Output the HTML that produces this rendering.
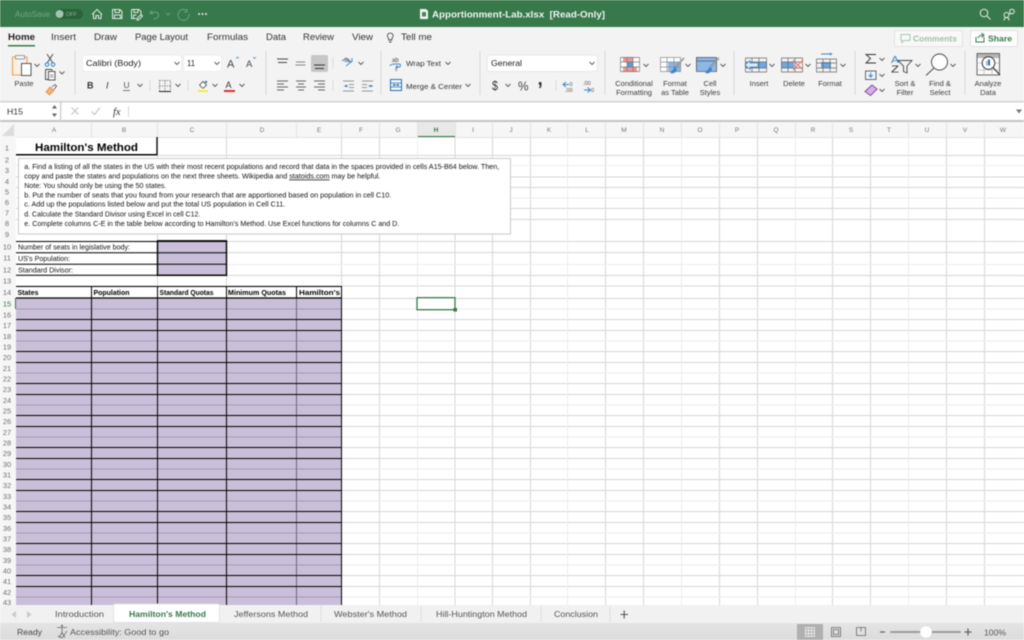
<!DOCTYPE html>
<html><head><meta charset="utf-8"><title>Apportionment-Lab.xlsx</title>
<style>
html,body{margin:0;padding:0;background:#fff;width:1024px;height:640px;overflow:hidden}
svg{display:block;position:absolute;left:0;top:0;filter:blur(.4px)}
text{font-family:"Liberation Sans",sans-serif;font-size:8px;fill:#3a3a3a;white-space:pre}
.r{font-size:7.5px;fill:#3c3c3c;text-anchor:middle}
.t{font-size:9px;fill:#333}
.s{font-size:7.4px;fill:#111}
.sb{font-size:7.2px;fill:#000;font-weight:bold}
.n{font-size:7.5px;fill:#707070;text-anchor:middle}
.c{font-size:6.5px;fill:#777;text-anchor:middle}
.tab{font-size:8.5px;fill:#555}
</style></head><body>
<svg width="1024" height="640" viewBox="0 0 1024 640" xmlns="http://www.w3.org/2000/svg">
<!-- title bar -->
<rect width="1024" height="27" fill="#37794a"/>
<text x="15" y="17" textLength="35" lengthAdjust="spacingAndGlyphs" style="font-size:8px;fill:#76a583">AutoSave</text>
<rect x="55" y="9" width="28" height="10" rx="5" fill="#2b6239"/>
<circle cx="59.5" cy="14" r="4" fill="#a5c2ad"/>
<text x="66" y="16" textLength="11" lengthAdjust="spacingAndGlyphs" style="font-size:5.5px;fill:#8fb59b">OFF</text>
<g fill="none" stroke="#dfeae2" stroke-width="1">
<path d="M92 14.5l5-5 5 5M93.5 13.5v5h2.5v-3h2.5v3h2.5v-5"/>
<path d="M112.5 9.5h7.5l2 2v7h-9.5zM115 9.5v3h4.500v-3M114.500 18.500v-3.500h6v3.500"/>
<path d="M131.500 9.500h7.500l2 2v2.500M131.500 9.500v9h4.500M134 9.500v3h4v-3M133.500 18v-3h3M137 18.500l4-4 1.500 1.500-4 4h-1.500z"/>
</g>
<g fill="none" stroke="#6f9f7e" stroke-width="1">
<path d="M151.500 10.500l-1.500 3h3.500M150.500 13c3-2 9-1 8 3-.5 2-3 3-5 3"/>
<path d="M166 13l2 2 2-2"/>
<path d="M187.500 11a5.500 5.500 0 1 0 1.500 3M187 9v3h-3"/>
</g>
<g fill="#e8f0ea"><circle cx="199" cy="14" r="1"/><circle cx="202.500" cy="14" r="1"/><circle cx="206" cy="14" r="1"/></g>
<path d="M420 9h6l2 2v8h-8z" fill="#f2f6f3"/><rect x="422" y="12" width="4" height="4.500" fill="#3f8a55"/>
<text x="432" y="17.500" textLength="173" lengthAdjust="spacingAndGlyphs" style="font-size:9.500px;font-weight:bold;fill:#f0f5f1">Apportionment-Lab.xlsx  [Read-Only]</text>
<g fill="none" stroke="#e6efe8" stroke-width="1">
<circle cx="984" cy="13" r="3.800"/><path d="M987 16l3.500 3.500"/>
<circle cx="1006.500" cy="15" r="2.500"/><path d="M1004 20.500c0-2 1.500-3 2.500-3 1.500 0 2.500 1 2.500 3"/><circle cx="1012" cy="11.500" r="2.300"/><path d="M1009 14c.5-.5 1.500-.5 2-.5"/>
</g>

<!-- tabs and ribbon -->
<rect y="27" width="1024" height="74" fill="#f3f3f3"/>
<text x="8" y="40" textLength="27" lengthAdjust="spacingAndGlyphs" class="t" style="font-weight:bold;fill:#1f1f1f">Home</text>
<rect x="8" y="45" width="27" height="1.500" fill="#37794a"/>
<text x="51" y="40" textLength="25" lengthAdjust="spacingAndGlyphs" class="t">Insert</text>
<text x="94" y="40" textLength="23" lengthAdjust="spacingAndGlyphs" class="t">Draw</text>
<text x="135" y="40" textLength="53" lengthAdjust="spacingAndGlyphs" class="t">Page Layout</text>
<text x="207" y="40" textLength="41" lengthAdjust="spacingAndGlyphs" class="t">Formulas</text>
<text x="266" y="40" textLength="20" lengthAdjust="spacingAndGlyphs" class="t">Data</text>
<text x="303" y="40" textLength="31" lengthAdjust="spacingAndGlyphs" class="t">Review</text>
<text x="352" y="40" textLength="21" lengthAdjust="spacingAndGlyphs" class="t">View</text>
<path d="M388 37.500a2.800 2.800 0 1 1 4.500 0c-.7.800-.8 1.500-.8 2.500h-2.900c0-1-.1-1.700-.8-2.500zM389 42h2.500" fill="none" stroke="#444" stroke-width=".9"/>
<text x="401" y="40" textLength="31" lengthAdjust="spacingAndGlyphs" class="t">Tell me</text>

<rect x="894.500" y="30.500" width="68" height="16" rx="1.500" fill="#f8f8f8" stroke="#e2e2e2"/>
<path d="M901 34.500h9v6h-6l-2 2v-2h-1z" fill="none" stroke="#a9c7b2"/>
<text x="913" y="41.500" textLength="44" lengthAdjust="spacingAndGlyphs" style="font-size:8.500px;font-weight:bold;fill:#9fbfa9">Comments</text>
<rect x="970.500" y="30.500" width="47" height="16" rx="1.500" fill="#fdfdfd" stroke="#e0e0e0"/>
<path d="M976 37v5h8v-5M978 38c1-2 3-3 5-3M981.500 33l2.500 2-2.500 2.500" fill="none" stroke="#37794a"/>
<text x="988" y="41.500" textLength="24" lengthAdjust="spacingAndGlyphs" style="font-size:8.500px;font-weight:bold;fill:#37794a">Share</text>

<!-- separators -->
<path d="M75 51v44M266 51v44M381 51v44M480 51v44M605 51v44M734 51v44M855 51v44M965 51v44" stroke="#d6d6d6" fill="none"/>
<path d="M150 80v11M188 80v11M333 57v12M333 80v11M556 80v11" stroke="#dcdcdc" fill="none"/>

<!-- chevrons -->
<path fill="none" stroke="#555" stroke-width=".9" d="M34.500 64l2.500 2.500 2.500-2.500M59.500 71.500l2.500 2.500 2.500-2.500M137.500 84l2.500 2.500 2.500-2.500M175.500 84l2.500 2.500 2.500-2.500M212.500 84l2.500 2.500 2.500-2.500M239.500 84l2.500 2.500 2.500-2.500M358.500 62l2.500 2.500 2.500-2.500M445.500 62l2.500 2.500 2.500-2.500M465.500 84l2.500 2.500 2.500-2.500M505.500 84l2.500 2.500 2.500-2.500M643.500 64l2.500 2.500 2.500-2.500M685.500 64l2.500 2.500 2.500-2.500M720.500 64l2.500 2.500 2.500-2.500M769.500 64l2.500 2.500 2.500-2.500M805.500 64l2.500 2.500 2.500-2.500M840.500 64l2.500 2.500 2.500-2.500M879.500 58l2.500 2.500 2.500-2.500M879.500 74l2.500 2.500 2.500-2.500M879.500 89l2.500 2.500 2.500-2.500M915.500 64l2.500 2.500 2.500-2.500M950.500 64l2.500 2.500 2.500-2.500"/>

<!-- clipboard -->
<path d="M16 57h-3.500v18h8.500M24 57h3v6" fill="#fbeedd" stroke="#e9a25b" stroke-width="1.100"/>
<rect x="15.500" y="55.500" width="9" height="3.500" fill="#f6f6f6" stroke="#8a8a8a" stroke-width=".8"/>
<rect x="21.500" y="63.500" width="9.500" height="12" fill="#fff" stroke="#444" stroke-width=".9"/>
<text x="24" y="86" class="r">Paste</text>
<path d="M47 54l5.500 8.500M53 54l-5.500 8.500" stroke="#444" fill="none" stroke-width=".9"/>
<circle cx="47" cy="64.500" r="1.800" fill="none" stroke="#2f7fc4"/><circle cx="53" cy="64.500" r="1.800" fill="none" stroke="#2f7fc4"/>
<path d="M45.500 69.500h6l1 1M45.500 69.500v10h2.500" fill="none" stroke="#444" stroke-width=".9"/><rect x="48.500" y="71.500" width="6.500" height="8.500" fill="#fff" stroke="#444" stroke-width=".9"/><path d="M50 75h3.500M50 77h3.500" stroke="#666" stroke-width=".7"/>
<path d="M46 92l4-5 4 3.500-4.500 4.500z" fill="#f1b27a" stroke="#de8e3f" stroke-width=".8"/><path d="M52 87l3-2.500 1.500 1.500-2.500 3.500" fill="#fff" stroke="#444" stroke-width=".8"/>

<!-- font group -->
<rect x="82.500" y="55" width="99" height="16.500" rx="2" fill="#fff" stroke="#ececec"/>
<rect x="183.500" y="55" width="38" height="16.500" rx="2" fill="#fff" stroke="#ececec"/>
<path fill="none" stroke="#555" stroke-width=".9" d="M174.500 62l2.500 2.500 2.500-2.500M214.500 62l2.500 2.500 2.500-2.500"/>
<text x="86" y="66" textLength="55" lengthAdjust="spacingAndGlyphs" style="font-size:8.500px;fill:#222">Calibri (Body)</text>
<text x="187" y="66" textLength="8" lengthAdjust="spacingAndGlyphs" style="font-size:8.500px;fill:#222">11</text>
<text x="227" y="67.500" style="font-size:11px;fill:#444">A</text>
<path d="M236 58.500l1.500-1.500 1.500 1.500" fill="none" stroke="#4a90d0" stroke-width=".8"/>
<text x="246" y="67" style="font-size:9.500px;fill:#444">A</text>
<path d="M253 57l1.500 1.500 1.500-1.500" fill="none" stroke="#4a90d0" stroke-width=".8"/>
<text x="87" y="88.500" style="font-size:9px;font-weight:bold;fill:#333">B</text>
<text x="106" y="88.500" style="font-size:9px;font-style:italic;fill:#333">I</text>
<text x="123.500" y="88" style="font-size:8.500px;fill:#555">U</text><path d="M123 90.500h7" stroke="#777"/>
<path d="M159.500 80.500h11v11h-11zM165 80.500v11M159.500 86h11" fill="none" stroke="#555" stroke-width=".8" stroke-dasharray="1.200 1.200"/><path d="M159 91.500h12" stroke="#222"/>
<path d="M199.500 85l3.500-3.500 3.500 3.500-3 3h-1z" fill="#fff" stroke="#444" stroke-width=".8"/><circle cx="206" cy="82" r="1.200" fill="#3c7fbf"/>
<rect x="198" y="90" width="10" height="2" fill="#f3ee3a"/>
<text x="225.500" y="88" style="font-size:9px;fill:#333">A</text>
<rect x="224" y="90" width="11" height="2" fill="#e0302a"/>

<!-- alignment -->
<rect x="311" y="55" width="17" height="17" rx="1.500" fill="#c7c7c7"/>
<path fill="none" stroke="#444" stroke-width=".9" d="M277 59h11M278 62.500h9"/>
<path fill="none" stroke="#888" stroke-width=".9" d="M296 62h9M295.500 65h10"/>
<path fill="none" stroke="#333" stroke-width=".9" d="M314 65h11M315 68.500h9"/>
<path fill="none" stroke="#666" stroke-width=".9" d="M277 81h11M277 84h7M277 87h11M277 90h7M296 81h10M298 84h6M296 87h10M298 90h6M314 81h11M318 84h7M314 87h11M318 90h7"/>
<path d="M342 61l4-3 5 5M346 66l6-5M352 58v3.500h-3" fill="none" stroke="#4a90d0" stroke-width="1"/>
<text x="344" y="62" style="font-size:5.500px;fill:#555">ab</text>
<path d="M343 81h11M349 84.500h5M349 87.500h5M343 91h11M344 86h4" fill="none" stroke="#777" stroke-width=".8"/>
<path d="M362 81h11M362 84.500h5M362 87.500h5M362 91h11M373 86h-5" fill="none" stroke="#777" stroke-width=".8"/>
<path d="M344 86l3-1.500v3zM373 86l-3-1.500v3z" fill="#3c86cc"/>

<!-- wrap / merge -->
<text x="392" y="62" style="font-size:6px;fill:#444">ab</text>
<path d="M390 66c0-2 5-2 7-2h2c2 0 2 3 0 3h-3m1.500-1.500l-1.500 1.500 1.500 1.500" fill="none" stroke="#3c86cc" stroke-width=".9"/>
<text x="395" y="71" style="font-size:5px;fill:#444">c</text>
<text x="406" y="66" textLength="35" lengthAdjust="spacingAndGlyphs" style="font-size:7.500px;fill:#333">Wrap Text</text>
<rect x="390.500" y="79.500" width="11" height="11" fill="#f3f8fd" stroke="#2d6ea8"/><path d="M390.500 83h11M390.500 87h11M393 85h6M393 85l1.500-1M393 85l1.500 1M399 85l-1.500-1M399 85l-1.500 1" stroke="#2d6ea8" stroke-width=".8" fill="none"/>
<text x="406" y="89" textLength="56" lengthAdjust="spacingAndGlyphs" style="font-size:7.500px;fill:#333">Merge &amp; Center</text>

<!-- number -->
<rect x="487.500" y="55" width="110" height="16.500" rx="2" fill="#fff" stroke="#e6e6e6"/>
<path fill="none" stroke="#555" stroke-width=".9" d="M589.500 62l2.500 2.500 2.500-2.500"/>
<text x="491" y="66" textLength="31" lengthAdjust="spacingAndGlyphs" style="font-size:8.500px;fill:#222">General</text>
<text x="492" y="90" textLength="6" lengthAdjust="spacingAndGlyphs" style="font-size:12.500px;fill:#333">$</text>
<text x="518" y="90.500" textLength="10.500" lengthAdjust="spacingAndGlyphs" style="font-size:13px;fill:#444">%</text>
<text x="537.500" y="85" style="font-size:19px;font-weight:bold;fill:#333">,</text>
<path d="M566 82l-3 2.500 3 2.500M563 84.500h6" fill="none" stroke="#3c86cc"/>
<text x="569.500" y="86" style="font-size:5.500px;fill:#555">0</text>
<text x="565" y="92" style="font-size:5.500px;fill:#555">.00</text>
<text x="583" y="85" style="font-size:5.500px;fill:#555">.00</text>
<path d="M584 90h6M587.500 87.500l3 2.500-3 2.500" fill="none" stroke="#3c86cc"/>
<text x="591" y="92" style="font-size:5.500px;fill:#555">0</text>

<!-- conditional -->
<rect x="620" y="57" width="20" height="15" fill="#fff"/>
<rect x="623" y="57" width="10" height="5" fill="#ef9595"/><rect x="627" y="62" width="6" height="5" fill="#5b9bd5"/><rect x="623" y="67" width="14" height="5" fill="#ef9595"/>
<path d="M620.500 57.500h19v14h-19zM620.500 62h19M620.500 67h19M627 57.500v14M633 57.500v14" fill="none" stroke="#777" stroke-width=".7"/>
<text x="634" y="86" class="r">Conditional</text><text x="634" y="95" class="r">Formatting</text>
<!-- format table -->
<rect x="660" y="57" width="21" height="15" fill="#fff"/><rect x="668" y="62" width="13" height="10" fill="#8db8e6"/>
<path d="M660.500 57.500h20v14h-20zM660.500 62h20M660.500 67h20M667 57.500v14M674 57.500v14" fill="none" stroke="#8a8a8a" stroke-width=".7"/>
<path d="M684 58l-9 9.500" stroke="#444" stroke-width="1.600"/><path d="M684 58l-9 9.500" stroke="#f5f5f5" stroke-width=".6"/><path d="M675 67l-5 6c3 1 6 0 7-4z" fill="#3c86cc"/>
<text x="675" y="86" class="r">Format</text><text x="675" y="95" class="r">as Table</text>
<!-- cell styles -->
<rect x="696" y="57" width="20" height="14" fill="#8db8e6"/>
<path d="M696.500 57.500h20v14h-20zM696.500 61h20" fill="none" stroke="#555" stroke-width=".8"/>
<path d="M719 58l-9 9.500" stroke="#444" stroke-width="1.600"/><path d="M719 58l-9 9.500" stroke="#f5f5f5" stroke-width=".6"/><path d="M710 67l-5 6c3 1 6 0 7-4z" fill="#3c86cc"/>
<text x="710" y="86" class="r">Cell</text><text x="710" y="95" class="r">Styles</text>
<!-- insert -->
<rect x="745" y="62" width="22" height="6" fill="#6ea8e0"/>
<path d="M745.500 58h21v14h-21zM745.500 62h21M745.500 68h21M752 58v14M759 58v14" fill="none" stroke="#666" stroke-width=".7"/>
<path d="M745 65l5-4.500v2.500h8v4h-8v2.500z" fill="#dcebfa" stroke="#3c86cc" stroke-width=".8"/>
<text x="759" y="86" class="r">Insert</text>
<!-- delete -->
<rect x="781" y="62" width="13" height="6" fill="#6ea8e0"/>
<path d="M781.500 58h21v14h-21zM781.500 62h21M781.500 68h21M788 58v14M795 58v14" fill="none" stroke="#666" stroke-width=".7"/>
<path d="M793 60l10 10M803 60l-10 10" stroke="#ee7a72" stroke-width="1.200"/>
<text x="794" y="86" class="r">Delete</text>
<!-- format -->
<rect x="821" y="62" width="10" height="6" fill="#6ea8e0"/>
<path d="M816.500 59h20v13h-20zM816.500 63h20M816.500 68h20M823 59v13M830 59v13" fill="none" stroke="#666" stroke-width=".7"/>
<path d="M821 54h11" stroke="#3c86cc"/><path d="M830 52.500l2.500 1.500-2.500 1.500z" fill="#3c86cc"/>
<text x="830" y="86" class="r">Format</text>
<!-- sigma etc -->
<path d="M876 54.500h-10l4.500 4-4.500 4.500h10" fill="none" stroke="#333" stroke-width=".9"/>
<rect x="865.500" y="71" width="10.500" height="8.500" fill="#eef4fb" stroke="#444" stroke-width=".8"/><path d="M870.700 72.500v4.500M868.700 75l2 2 2-2" fill="none" stroke="#3c86cc"/>
<path d="M865 91.500l7-6.500 5 4-6.500 6.500z" fill="#d3b2e2" stroke="#8a43a8" stroke-width="1"/>
<text x="891" y="63" textLength="8" lengthAdjust="spacingAndGlyphs" style="font-size:10px;fill:#3c86cc">A</text>
<text x="891" y="72.500" textLength="8" lengthAdjust="spacingAndGlyphs" style="font-size:10px;fill:#333">Z</text>
<path d="M898 60.500h14l-5 5.500v7l-3.500-1.500v-5.500z" fill="none" stroke="#444" stroke-width=".9"/>
<text x="905" y="86" class="r">Sort &amp;</text><text x="905" y="95" class="r">Filter</text>
<circle cx="939.500" cy="62" r="8" fill="#fff" stroke="#444" stroke-width=".9"/><path d="M934 68l-8 7.500" stroke="#444" stroke-width=".9"/>
<text x="940" y="86" class="r">Find &amp;</text><text x="940" y="95" class="r">Select</text>
<rect x="977" y="53.500" width="22.500" height="21.500" fill="#fafafa" stroke="#444" stroke-width=".8"/>
<rect x="977.500" y="54" width="21.500" height="4" fill="#b5b5b5"/>
<path d="M977 63h22M977 70h22M984 58v17M992 58v17" stroke="#aaa" stroke-width=".6"/>
<circle cx="988.500" cy="63" r="6.300" fill="#fff" stroke="#333"/><rect x="986" y="61" width="1.500" height="4.500" fill="#8db8e6"/><rect x="988" y="59.500" width="2" height="6" fill="#2d6ea8"/><path d="M993 67.500l7 7.500" stroke="#333" stroke-width="1.200"/>
<text x="988" y="86" class="r">Analyze</text><text x="988" y="95" class="r">Data</text>

<!-- formula bar -->
<rect y="101" width="1024" height="1.500" fill="#d0d0d0"/>
<rect y="102.500" width="1024" height="18" fill="#fff"/>
<rect y="120" width="1024" height="2" fill="#c4c4c4"/>
<path d="M60.500 102v18" stroke="#c8c8c8"/>
<rect x="61" y="102.500" width="1" height="18" fill="#f0f0f0"/>
<text x="7" y="114.500" textLength="16" lengthAdjust="spacingAndGlyphs" style="font-size:8.500px;fill:#333">H15</text>
<path d="M52 108.500l2.500-3.500 2.500 3.500zM52 113.500l2.500 3.500 2.500-3.500z" fill="#666"/>
<path d="M71.500 107.500l7 7M78.500 107.500l-7 7" stroke="#c4c4c4" stroke-width="1.100"/>
<path d="M91.500 111.500l3 3 5.500-7" fill="none" stroke="#c4c4c4" stroke-width="1.100"/>
<text x="113" y="115" style="font-family:'Liberation Serif',serif;font-size:10.500px;font-style:italic;fill:#333">fx</text>
<path d="M128.500 106v11" stroke="#d5d5d5"/>
<path d="M1016 109.500h6l-3 4z" fill="#777"/>

<!-- headers -->
<rect y="122" width="1024" height="15" fill="#f6f6f6"/>
<rect x="0" y="137" width="16" height="468" fill="#f6f6f6"/>
<path d="M14 124v12h-12z" fill="#dcdcdc"/>
<rect x="417" y="122" width="38" height="15" fill="#e8e8e8"/>
<rect x="417" y="136" width="38" height="1.200" fill="#37794a"/>
<path stroke="#e2e2e2" fill="none" d="M16 137.500H417M455 137.500H1024M91.500 123v14M157.500 123v14M226.500 123v14M296.500 123v14M341.500 123v14M379.500 123v14M417.500 123v14M455.500 123v14M492.500 123v14M530.500 123v14M567.500 123v14M605.500 123v14M643.500 123v14M681.500 123v14M719.500 123v14M757.500 123v14M795.500 123v14M832.500 123v14M870.500 123v14M908.500 123v14M946.500 123v14M984.500 123v14"/>
<text x="54" y="132" class="c">A</text><text x="124" y="132" class="c">B</text><text x="192" y="132" class="c">C</text><text x="262" y="132" class="c">D</text><text x="319" y="132" class="c">E</text><text x="361" y="132" class="c">F</text><text x="398" y="132" class="c">G</text><text x="436" y="132" class="c" style="fill:#37794a;font-weight:bold">H</text><text x="473" y="132" class="c">I</text><text x="511" y="132" class="c">J</text><text x="549" y="132" class="c">K</text><text x="587" y="132" class="c">L</text><text x="624" y="132" class="c">M</text><text x="662" y="132" class="c">N</text><text x="700" y="132" class="c">O</text><text x="737" y="132" class="c">P</text><text x="776" y="132" class="c">Q</text><text x="813" y="132" class="c">R</text><text x="851" y="132" class="c">S</text><text x="889" y="132" class="c">T</text><text x="927" y="132" class="c">U</text><text x="965" y="132" class="c">V</text><text x="1003" y="132" class="c">W</text>

<!-- grid -->
<path stroke="#d6d6d6" fill="none" d="M16 155.500H1024M16 177H1024M16 187.500H1024M16 208.500H1024M16 219.500H1024M16 241.500H1024M16 252.500H1024M16 275.500H1024M16 286H1024M16 298.500H1024M16 319.500H1024M16 330.500H1024M16 351.500H1024M16 362.500H1024M16 383.500H1024M16 394.500H1024M16 415.500H1024M16 426.500H1024M16 447.500H1024M16 458.500H1024M16 479.500H1024M16 490.500H1024M16 511.500H1024M16 522.500H1024M16 543.500H1024M16 554.500H1024M16 575.500H1024M16 586.500H1024M379.500 137V605M455 137V605M492.500 137V605M530.500 137V605M605.500 137V605M643.500 137V605M719.500 137V605M757.500 137V605M832.500 137V605M870.500 137V605M946.500 137V605M984.500 137V605M157.500 137V605M226.500 137V605M341.500 137V605"/>
<path stroke="#ececec" fill="none" d="M16 165.500H1024M16 198H1024M16 264.500H1024M16 309H1024M16 341H1024M16 373H1024M16 405H1024M16 437H1024M16 469H1024M16 501H1024M16 533H1024M16 565H1024M16 597H1024M417.500 137V605M567.500 137V605M681.500 137V605M795.500 137V605M908.500 137V605"/>

<!-- row numbers -->
<text x="7" y="150.500" class="n">1</text><text x="7" y="162.500" class="n">2</text><text x="7" y="173" class="n">3</text><text x="7" y="184" class="n">4</text><text x="7" y="194.500" class="n">5</text><text x="7" y="205" class="n">6</text><text x="7" y="215.500" class="n">7</text><text x="7" y="226" class="n">8</text><text x="7" y="237" class="n">9</text>
<text x="7" y="249.500" class="n">10</text><text x="7" y="260.500" class="n">11</text><text x="7" y="272.500" class="n">12</text><text x="7" y="283.500" class="n">13</text><text x="7" y="295" class="n">14</text><text x="7" y="306.500" class="n" style="fill:#37794a">15</text><text x="7" y="317.500" class="n">16</text><text x="7" y="328" class="n">17</text><text x="7" y="339" class="n">18</text><text x="7" y="349.500" class="n">19</text><text x="7" y="360" class="n">20</text><text x="7" y="371" class="n">21</text><text x="7" y="381.500" class="n">22</text><text x="7" y="392" class="n">23</text><text x="7" y="403" class="n">24</text><text x="7" y="413.500" class="n">25</text><text x="7" y="424" class="n">26</text><text x="7" y="435" class="n">27</text><text x="7" y="445.500" class="n">28</text><text x="7" y="456" class="n">29</text><text x="7" y="467" class="n">30</text><text x="7" y="477.500" class="n">31</text><text x="7" y="488" class="n">32</text><text x="7" y="499" class="n">33</text><text x="7" y="509.500" class="n">34</text><text x="7" y="520" class="n">35</text><text x="7" y="531" class="n">36</text><text x="7" y="541.500" class="n">37</text><text x="7" y="552" class="n">38</text><text x="7" y="563" class="n">39</text><text x="7" y="573.500" class="n">40</text><text x="7" y="584" class="n">41</text><text x="7" y="595" class="n">42</text><text x="7" y="605" class="n">43</text>

<!-- title cell -->
<rect x="16" y="137.500" width="141" height="17.500" fill="#fff"/>
<path d="M16 154.700H157.500M157 137V155" stroke="#000" stroke-width="1.300" fill="none"/>
<text x="35" y="151" textLength="103" lengthAdjust="spacingAndGlyphs" style="font-size:11px;font-weight:bold;fill:#000">Hamilton's Method</text>

<!-- text box -->
<rect x="18.500" y="158.500" width="492" height="75.500" fill="#fff" stroke="#c8c8c8"/>
<text x="24.300" y="169" textLength="475" lengthAdjust="spacingAndGlyphs" class="s">a. Find a listing of all the states in the US with their most recent populations and record that data in the spaces provided in cells A15-B64 below. Then,</text>
<text x="24.300" y="178.500" textLength="356" lengthAdjust="spacingAndGlyphs" class="s">copy and paste the states and populations on the next three sheets. Wikipedia and <tspan text-decoration="underline">statoids.com</tspan> may be helpful.</text>
<text x="24.300" y="188" textLength="142" lengthAdjust="spacingAndGlyphs" class="s">Note: You should only be using the 50 states.</text>
<text x="24.300" y="197.500" textLength="367" lengthAdjust="spacingAndGlyphs" class="s">b. Put the number of seats that you found from your research that are apportioned based on population in cell C10.</text>
<text x="24.300" y="206.500" textLength="261" lengthAdjust="spacingAndGlyphs" class="s">c. Add up the populations listed below and put the total US population in Cell C11.</text>
<text x="24.300" y="216.500" textLength="176" lengthAdjust="spacingAndGlyphs" class="s">d. Calculate the Standard Divisor using Excel in cell C12.</text>
<text x="24.300" y="226" textLength="375" lengthAdjust="spacingAndGlyphs" class="s">e. Complete columns C-E in the table below according to Hamilton's Method. Use Excel functions for columns C and D.</text>

<!-- small table -->
<rect x="16" y="241" width="141" height="34.500" fill="#fff"/>
<rect x="157.500" y="241" width="69" height="34.500" fill="#c9bfd9"/>
<path d="M16 241.500H226M16 252.700H226M16 264.200H226M16 275.300H226" stroke="#000" fill="none"/>
<path d="M157.500 240.500V276M226.500 240.500V276M157 240.800H227M157 275.300H227" stroke="#000" stroke-width="1.400" fill="none"/>
<text x="18" y="249.500" textLength="112" lengthAdjust="spacingAndGlyphs" class="s">Number of seats in legislative body:</text>
<text x="18" y="261" textLength="52" lengthAdjust="spacingAndGlyphs" class="s">US's Population:</text>
<text x="18" y="272.500" textLength="55" lengthAdjust="spacingAndGlyphs" class="s">Standard Divisor:</text>

<!-- main table -->
<rect x="16" y="286" width="325.500" height="12" fill="#fff"/>
<rect x="16" y="298" width="325.500" height="307" fill="#c9bfd9"/>
<text x="17.500" y="295" textLength="21" lengthAdjust="spacingAndGlyphs" class="sb">States</text>
<text x="93.500" y="295" textLength="36" lengthAdjust="spacingAndGlyphs" class="sb">Population</text>
<text x="159.500" y="295" textLength="54" lengthAdjust="spacingAndGlyphs" class="sb">Standard Quotas</text>
<text x="228" y="295" textLength="58" lengthAdjust="spacingAndGlyphs" class="sb">Minimum Quotas</text>
<text x="299" y="295" textLength="41" lengthAdjust="spacingAndGlyphs" class="sb">Hamilton's</text>
<path stroke="#a698b8" fill="none" d="M16 309H341M16 341H341M16 373H341M16 405H341M16 437H341M16 469H341M16 501H341M16 533H341M16 565H341M16 597H341"/>
<path stroke="#6b6478" fill="none" d="M296.500 298V605"/>
<path stroke="#000" fill="none" d="M16 286.500H342M296.500 286V298M91.500 286V605M157.500 286V605M226.500 286V605M341.500 286V605M16 319.500H341M16 330.500H341M16 351.500H341M16 362.500H341M16 383.500H341M16 394.500H341M16 415.500H341M16 426.500H341M16 447.500H341M16 458.500H341M16 479.500H341M16 490.500H341M16 511.500H341M16 522.500H341M16 543.500H341M16 554.500H341M16 575.500H341M16 586.500H341"/>
<path stroke="#000" stroke-width="1.300" fill="none" d="M16 298H342"/>
<rect x="15" y="298" width="1" height="11" fill="#37794a"/>

<!-- selected cell -->
<rect x="417" y="297.700" width="38" height="12" fill="#fff" stroke="#37794a" stroke-width="1.300"/>
<rect x="453.500" y="308" width="3.500" height="3.500" fill="#37794a"/>

<!-- sheet tabs -->
<rect y="605" width="1024" height="18" fill="#f1f1f1"/>
<path d="M16 611l-4.500 3.500 4.500 3.500z" fill="#c9c9c9"/><path d="M27 611l4.500 3.500-4.500 3.500z" fill="#c9c9c9"/>
<text x="55" y="617" textLength="49" lengthAdjust="spacingAndGlyphs" class="tab">Introduction</text>
<rect x="113.500" y="604" width="106" height="18.500" rx="1.500" fill="#fff" stroke="#e2e2e2"/>
<text x="129" y="617" textLength="77" lengthAdjust="spacingAndGlyphs" class="tab" style="fill:#37794a;font-weight:bold">Hamilton's Method</text>
<text x="234" y="617" textLength="74" lengthAdjust="spacingAndGlyphs" class="tab">Jeffersons Method</text>
<text x="334" y="617" textLength="73" lengthAdjust="spacingAndGlyphs" class="tab">Webster's Method</text>
<text x="436" y="617" textLength="91" lengthAdjust="spacingAndGlyphs" class="tab">Hill-Huntington Method</text>
<text x="554" y="617" textLength="44" lengthAdjust="spacingAndGlyphs" class="tab">Conclusion</text>
<path d="M321 606v16M421 606v16M541 606v16M610 606v16" stroke="#dedede"/>
<path d="M620.500 614.500h7.500M624.200 610.500v8" stroke="#555" stroke-width="1.100"/>

<!-- status bar -->
<defs><linearGradient id="g" x1="0" y1="0" x2="0" y2="1"><stop offset="0" stop-color="#e4e4e4"/><stop offset="1" stop-color="#dcdcdc"/></linearGradient></defs>
<rect y="623" width="1024" height="17" fill="url(#g)"/>
<text x="17" y="635" textLength="25" lengthAdjust="spacingAndGlyphs" style="font-size:8.500px;fill:#444">Ready</text>
<path d="M57 627.500h10M62 627.500v5M62 632.500l-3 5M62 632.500l3 5" stroke="#666" stroke-width=".8" fill="none"/><circle cx="62" cy="625.800" r="1" fill="#666"/><path d="M58 636l4 2 5-7" fill="none" stroke="#666" stroke-width=".7"/>
<text x="70" y="635" textLength="99" lengthAdjust="spacingAndGlyphs" style="font-size:8.500px;fill:#555">Accessibility: Good to go</text>
<rect x="797" y="624" width="26" height="16" fill="#b0b0b0"/>
<path d="M805.500 627.500h9v9h-9zM805.500 630.500h9M805.500 633.500h9M808.500 627.500v9M811.500 627.500v9" stroke="#f2f2f2" stroke-width=".8" fill="none"/>
<path d="M831.500 627.500h9v9h-9zM833.500 629.500h5v5h-5z" stroke="#666" stroke-width=".8" fill="none"/>
<path d="M856.500 627.500h9v8h-9zM861 627.500v4" stroke="#666" stroke-width=".8" fill="none"/>
<path d="M880 632h5M964.500 632h7M968 628.500v7" stroke="#666" stroke-width="1.300" fill="none"/>
<rect x="890" y="631" width="71" height="2" rx="1" fill="#9c9c9c"/>
<circle cx="926" cy="632" r="5.800" fill="#fff"/>
<text x="984" y="635.500" textLength="22" lengthAdjust="spacingAndGlyphs" style="font-size:8.500px;fill:#555">100%</text>
</svg>
</body></html>
